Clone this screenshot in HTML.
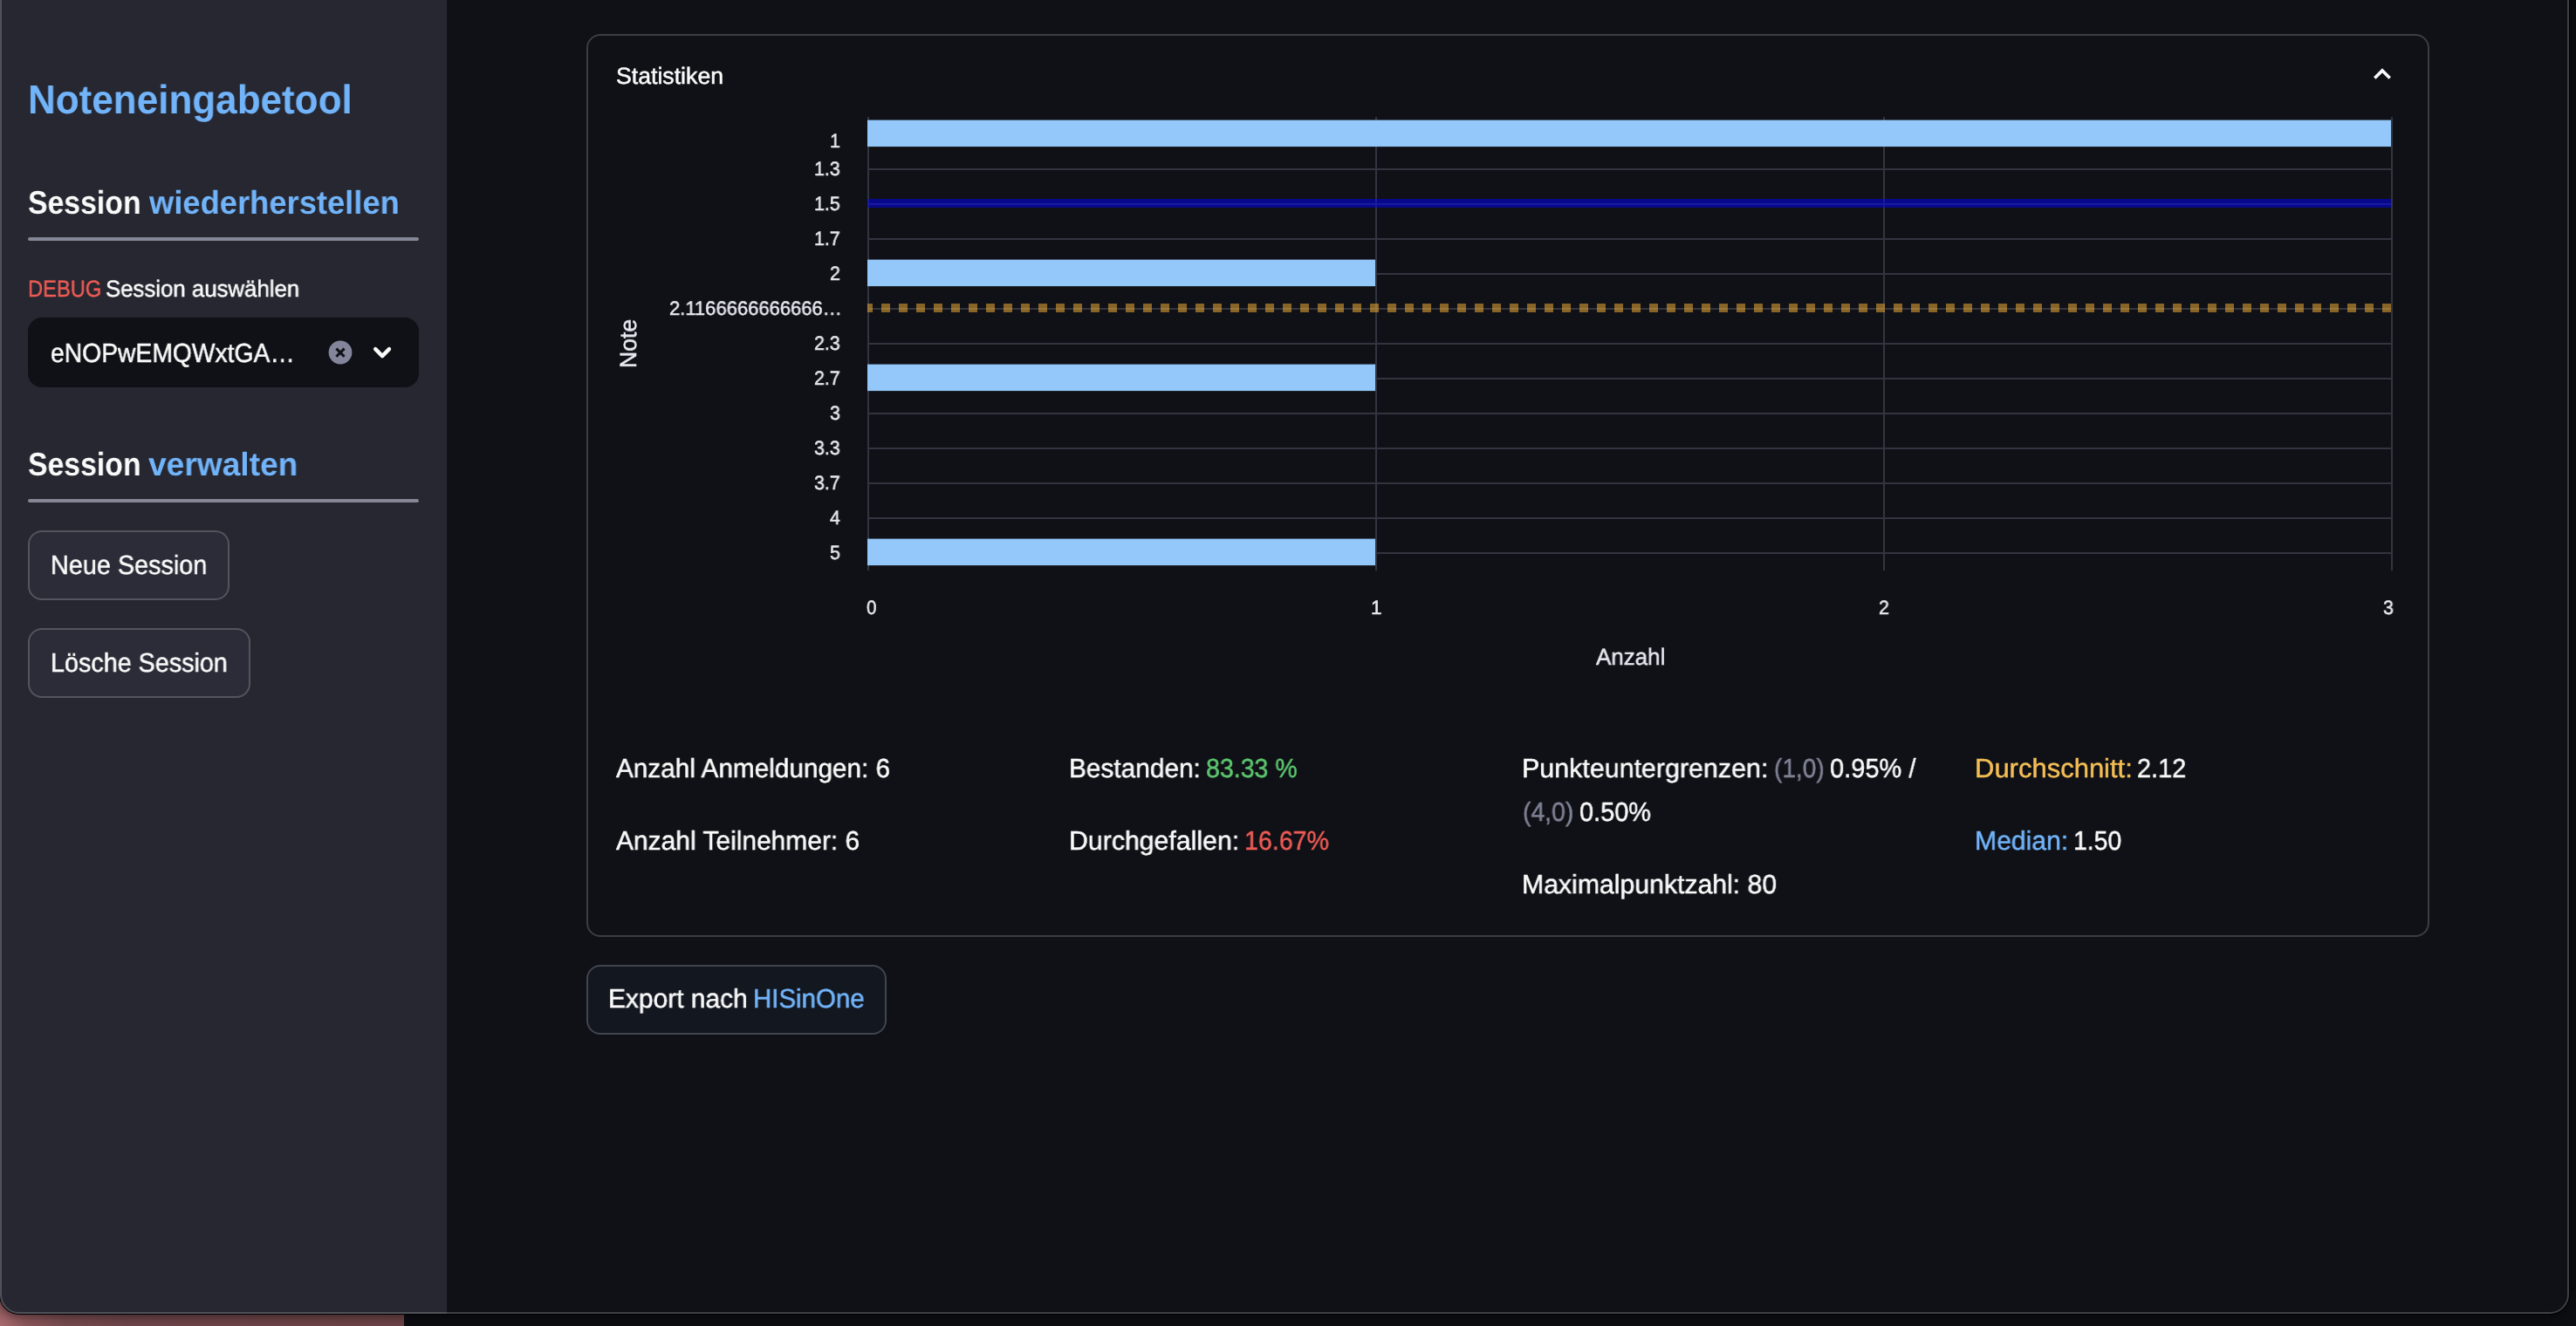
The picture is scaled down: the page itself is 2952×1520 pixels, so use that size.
<!DOCTYPE html>
<html lang="de">
<head>
<meta charset="utf-8">
<title>Noteneingabetool</title>
<style>
html,body{margin:0;padding:0;}
body{width:2952px;height:1520px;position:relative;overflow:hidden;background:#0a0b0f;font-family:"Liberation Sans",sans-serif;color:#fafafa;}
.t{position:absolute;white-space:pre;line-height:normal;transform-origin:0 0;margin:0;font-weight:400;will-change:transform;text-rendering:geometricPrecision;}
.r{-webkit-text-stroke:0.5px currentColor;}
h1,h2,p,label{margin:0;font-size:inherit;font-weight:inherit;}
.desk-l{position:absolute;left:0;top:1480px;width:463px;height:40px;background:radial-gradient(circle at 0 100%,#a8696d 0,#8a5559 30px,#754a4e 75px,#6d4448 150px,#6b4246 100%);}
.desk-r{position:absolute;left:463px;top:1480px;width:2489px;height:40px;background:#0d0e12;}
.win{position:absolute;left:0;top:0;width:2944px;height:1506px;background:#101116;border-radius:0 0 22px 22px;overflow:hidden;box-shadow:0 0 0 1px #000,0 3px 10px 2px rgba(0,0,0,.35);}
.winborder{position:absolute;left:0;top:-40px;width:2944px;height:1546px;box-sizing:border-box;border:2px solid rgba(255,255,255,.2);border-radius:22px;pointer-events:none;}
.sidebar{position:absolute;left:0;top:0;width:512px;height:1506px;background:#262730;}
.hr{position:absolute;left:32px;width:448px;height:4px;border-radius:2px;background:#858797;}
.select{position:absolute;left:32px;top:364px;width:448px;height:80px;border-radius:16px;background:#101116;}
.btn{position:absolute;box-sizing:border-box;border:2px solid #53555e;border-radius:16px;background:#2b2c37;}
.card{position:absolute;left:672px;top:39px;width:2112px;height:1035px;box-sizing:border-box;border:2px solid #3c3e45;border-radius:16px;}
.chart{position:absolute;overflow:visible;font-family:"Liberation Sans",sans-serif;}
.ico{position:absolute;overflow:visible;}
</style>
</head>
<body>
<div class="desk-l"></div><div class="desk-r"></div>
<div class="win">
<aside class="sidebar">
<h1><span class="t" style="left:32.4px;top:87.0px;font-size:46.41px;color:#72b4fa;font-weight:700;transform:scaleX(0.9485);">Noteneingabetool</span></h1>
<h2><span class="t" style="left:32.0px;top:211.0px;font-size:37.5px;color:#fafafa;font-weight:700;transform:scaleX(0.9006);">Session</span> <span class="t" style="left:171.3px;top:211.0px;font-size:37.5px;color:#72b4fa;font-weight:700;transform:scaleX(0.9690);">wiederherstellen</span></h2>
<div class="hr" style="top:272px"></div>
<label><span class="t r" style="left:31.6px;top:316.0px;font-size:26.68px;color:#ee5b55;transform:scaleX(0.8901);">DEBUG</span> <span class="t r" style="left:121.3px;top:316.0px;font-size:26.68px;color:#fafafa;transform:scaleX(0.9665);">Session auswählen</span></label>
<div class="select"></div>
<span class="t r" style="left:57.7px;top:388.0px;font-size:30.5px;color:#fafafa;transform:scaleX(0.9273);">eNOPwEMQWxtGA…</span>
<svg class="ico" style="left:376px;top:390px" width="28" height="28" viewBox="0 0 28 28"><circle cx="14" cy="14" r="13.4" fill="#83869a"/><path d="M9.4 9.6 L18.6 18.8 M18.6 9.6 L9.4 18.8" stroke="#101116" stroke-width="3" stroke-linecap="butt"/></svg>
<svg class="ico" style="left:426px;top:396px" width="24" height="18" viewBox="0 0 24 18"><path d="M4.2 4.1 L12.1 12.1 L20 4.1" fill="none" stroke="#fafafa" stroke-width="4.4" stroke-linecap="round" stroke-linejoin="round"/></svg>
<h2><span class="t" style="left:32.0px;top:511.0px;font-size:37.5px;color:#fafafa;font-weight:700;transform:scaleX(0.9006);">Session</span> <span class="t" style="left:170.3px;top:511.0px;font-size:37.5px;color:#72b4fa;font-weight:700;transform:scaleX(0.9906);">verwalten</span></h2>
<div class="hr" style="top:572px"></div>
<div class="btn" style="left:32px;top:608px;width:231px;height:80px"></div><span class="t r" style="left:57.8px;top:631.0px;font-size:30.5px;color:#fafafa;transform:scaleX(0.9438);">Neue Session</span>
<div class="btn" style="left:32px;top:720px;width:255px;height:80px"></div><span class="t r" style="left:57.8px;top:743.0px;font-size:30.5px;color:#fafafa;transform:scaleX(0.9416);">Lösche Session</span>
</aside>
<main>
<section class="card"></section>
<span class="t r" style="left:706.0px;top:72.0px;font-size:26.68px;color:#fafafa;">Statistiken</span>
<svg class="ico" style="left:2718px;top:74px" width="24" height="18" viewBox="0 0 24 18"><path d="M3.3 15.6 L12 6.9 L20.7 15.6" fill="none" stroke="#fafafa" stroke-width="3.6" stroke-linecap="butt" stroke-linejoin="miter"/></svg>
<svg class="chart" width="1800" height="560" viewBox="980 120 1800 560" style="left:980px;top:120px">
<rect x="994" y="153" width="1746" height="2" fill="#32343f"/>
<rect x="994" y="193" width="1746" height="2" fill="#32343f"/>
<rect x="994" y="233" width="1746" height="2" fill="#32343f"/>
<rect x="994" y="273" width="1746" height="2" fill="#32343f"/>
<rect x="994" y="313" width="1746" height="2" fill="#32343f"/>
<rect x="994" y="353" width="1746" height="2" fill="#32343f"/>
<rect x="994" y="393" width="1746" height="2" fill="#32343f"/>
<rect x="994" y="433" width="1746" height="2" fill="#32343f"/>
<rect x="994" y="473" width="1746" height="2" fill="#32343f"/>
<rect x="994" y="513" width="1746" height="2" fill="#32343f"/>
<rect x="994" y="553" width="1746" height="2" fill="#32343f"/>
<rect x="994" y="593" width="1746" height="2" fill="#32343f"/>
<rect x="994" y="633" width="1746" height="2" fill="#32343f"/>
<rect x="994" y="134" width="2" height="520" fill="#32343f"/>
<rect x="1576" y="134" width="2" height="520" fill="#32343f"/>
<rect x="2158" y="134" width="2" height="520" fill="#32343f"/>
<rect x="2740" y="134" width="2" height="520" fill="#32343f"/>
<rect x="994" y="137.6" width="1746" height="30.5" fill="#94c8fa"/>
<rect x="994" y="297.6" width="582" height="30.5" fill="#94c8fa"/>
<rect x="994" y="417.6" width="582" height="30.5" fill="#94c8fa"/>
<rect x="994" y="617.6" width="582" height="30.5" fill="#94c8fa"/>
<rect x="994" y="228" width="1746" height="10" fill="#0000ff" fill-opacity="0.5"/>
<clipPath id="plot"><rect x="994" y="130" width="1746" height="530"/></clipPath>
<line clip-path="url(#plot)" x1="990" x2="2740" y1="353" y2="353" stroke="#ffb737" stroke-opacity="0.5" stroke-width="10" stroke-dasharray="10 10"/>
</svg>
<div class="ticks"><span class="t r" style="left:950.6px;top:149.0px;font-size:22.5px;color:#e6eaf1;transform:scaleX(0.9500);">1</span> <span class="t r" style="left:932.7px;top:181.0px;font-size:22.5px;color:#e6eaf1;transform:scaleX(0.9500);">1.3</span> <span class="t r" style="left:932.7px;top:221.0px;font-size:22.5px;color:#e6eaf1;transform:scaleX(0.9500);">1.5</span> <span class="t r" style="left:932.8px;top:261.0px;font-size:22.5px;color:#e6eaf1;transform:scaleX(0.9500);">1.7</span> <span class="t r" style="left:950.6px;top:301.0px;font-size:22.5px;color:#e6eaf1;transform:scaleX(0.9500);">2</span> <span class="t r" style="left:766.7px;top:341.0px;font-size:22.5px;color:#e6eaf1;transform:scaleX(0.9772);">2.1166666666666…</span> <span class="t r" style="left:932.7px;top:381.0px;font-size:22.5px;color:#e6eaf1;transform:scaleX(0.9500);">2.3</span> <span class="t r" style="left:932.8px;top:421.0px;font-size:22.5px;color:#e6eaf1;transform:scaleX(0.9500);">2.7</span> <span class="t r" style="left:950.6px;top:461.0px;font-size:22.5px;color:#e6eaf1;transform:scaleX(0.9500);">3</span> <span class="t r" style="left:932.7px;top:501.0px;font-size:22.5px;color:#e6eaf1;transform:scaleX(0.9500);">3.3</span> <span class="t r" style="left:932.8px;top:541.0px;font-size:22.5px;color:#e6eaf1;transform:scaleX(0.9500);">3.7</span> <span class="t r" style="left:950.6px;top:581.0px;font-size:22.5px;color:#e6eaf1;transform:scaleX(0.9500);">4</span> <span class="t r" style="left:950.6px;top:621.0px;font-size:22.5px;color:#e6eaf1;transform:scaleX(0.9500);">5</span> <span class="t r" style="left:993.4px;top:684.0px;font-size:22.5px;color:#e6eaf1;transform:scaleX(0.9113);">0</span> <span class="t r" style="left:1570.8px;top:684.0px;font-size:22.5px;color:#e6eaf1;transform:scaleX(0.9750);">1</span> <span class="t r" style="left:2152.8px;top:684.0px;font-size:22.5px;color:#e6eaf1;transform:scaleX(0.9500);">2</span> <span class="t r" style="left:2730.6px;top:684.0px;font-size:22.5px;color:#e6eaf1;transform:scaleX(0.9500);">3</span> <span class="t r" style="left:1828.5px;top:738.0px;font-size:26.6px;color:#e6eaf1;transform:scaleX(0.9750);">Anzahl</span> <span class="t r" style="left:705.0px;top:422.0px;font-size:26.6px;color:#e6eaf1;transform:rotate(-90deg) scaleX(0.9966);">Note</span></div>
<p><span class="t r" style="left:705.5px;top:864.0px;font-size:30.5px;color:#fafafa;transform:scaleX(0.9748);">Anzahl Anmeldungen: 6</span></p><p><span class="t r" style="left:705.5px;top:947.0px;font-size:30.5px;color:#fafafa;transform:scaleX(0.9823);">Anzahl Teilnehmer: 6</span></p>
<p><span class="t r" style="left:1224.8px;top:864.0px;font-size:30.5px;color:#fafafa;transform:scaleX(0.9773);">Bestanden:</span> <span class="t r" style="left:1381.8px;top:864.0px;font-size:30.5px;color:#5cc66f;transform:scaleX(0.9355);">83.33 %</span></p><p><span class="t r" style="left:1224.8px;top:947.0px;font-size:30.5px;color:#fafafa;transform:scaleX(0.9922);">Durchgefallen:</span> <span class="t r" style="left:1425.5px;top:947.0px;font-size:30.5px;color:#ee5b55;transform:scaleX(0.9384);">16.67%</span></p>
<p><span class="t r" style="left:1743.9px;top:864.0px;font-size:30.5px;color:#fafafa;transform:scaleX(0.9971);">Punkteuntergrenzen:</span> <span class="t r" style="left:2032.5px;top:864.0px;font-size:30.5px;color:#7e8294;transform:scaleX(0.9210);">(1,0)</span> <span class="t r" style="left:2096.8px;top:864.0px;font-size:30.5px;color:#fafafa;transform:scaleX(0.9515);">0.95% /</span> <span class="t r" style="left:1744.6px;top:914.0px;font-size:30.5px;color:#7e8294;transform:scaleX(0.9311);">(4,0)</span> <span class="t r" style="left:1809.7px;top:914.0px;font-size:30.5px;color:#fafafa;transform:scaleX(0.9480);">0.50%</span></p><p><span class="t r" style="left:1743.9px;top:997.0px;font-size:30.5px;color:#fafafa;transform:scaleX(0.9904);">Maximalpunktzahl: 80</span></p>
<p><span class="t r" style="left:2262.7px;top:864.0px;font-size:30.5px;color:#f3bd55;transform:scaleX(1.0160);">Durchschnitt:</span> <span class="t r" style="left:2449.4px;top:864.0px;font-size:30.5px;color:#fafafa;transform:scaleX(0.9456);">2.12</span></p><p><span class="t r" style="left:2262.8px;top:947.0px;font-size:30.5px;color:#72b4fa;transform:scaleX(0.9885);">Median:</span> <span class="t r" style="left:2375.7px;top:947.0px;font-size:30.5px;color:#fafafa;transform:scaleX(0.9282);">1.50</span></p>
<div class="btn" style="left:672px;top:1106px;width:344px;height:80px;background:#131720;border-color:#42454d"></div><span class="t r" style="left:697.4px;top:1128.0px;font-size:30.5px;color:#fafafa;transform:scaleX(0.9818);">Export nach</span> <span class="t r" style="left:862.9px;top:1128.0px;font-size:30.5px;color:#72b4fa;transform:scaleX(0.9659);">HISinOne</span>
</main>
</div>
<div class="winborder"></div>
</body>
</html>
